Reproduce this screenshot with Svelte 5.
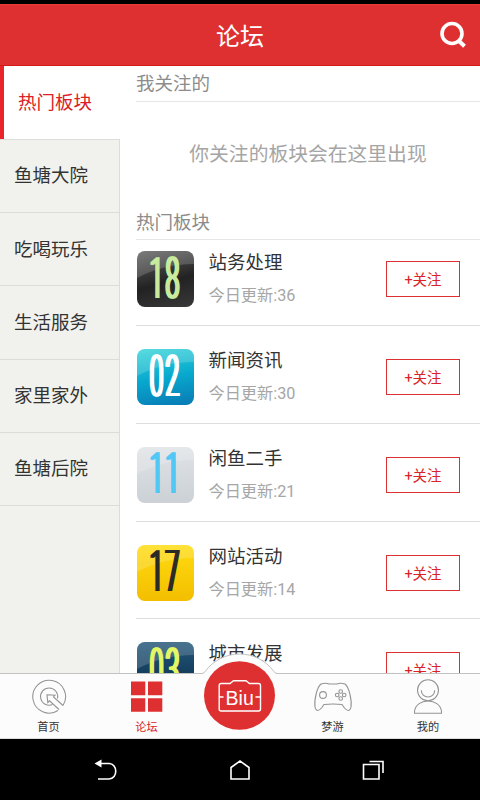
<script>
  let active = $state(0);

  const categories = ['热门板块', '鱼塘大院', '吃喝玩乐', '生活服务', '家里家外', '鱼塘后院'];

  const boards = [
    { num: '18', name: '站务处理', count: 36, style: 'leather' },
    { num: '02', name: '新闻资讯', count: 30, style: 'aqua' },
    { num: '11', name: '闲鱼二手', count: 21, style: 'silver' },
    { num: '17', name: '网站活动', count: 14, style: 'yellow' },
    { num: '03', name: '城市发展', count: 9, style: 'navy' },
  ];
</script>

<div class="phone">
  <div class="status"></div>
  <header>
    <span class="side"></span>
    <h1>论坛</h1>
    <svg class="side" viewBox="0 0 30 30" fill="none" stroke="#fff">
      <circle cx="14" cy="13.5" r="10" stroke-width="3.6" />
      <path d="M20.5 20.5L26.5 26.3" stroke-width="4" />
    </svg>
  </header>

  <main>
    <nav class="categories">
      {#each categories as category, i}
        <button class={i == active ? 'active' : ''} onclick={() => (active = i)}>{category}</button>
      {/each}
    </nav>

    <section class="content">
      <h2 class="followed">我关注的</h2>
      <p class="empty">你关注的板块会在这里出现</p>
      <h2 class="hot">热门板块</h2>
      {#each boards as board}
        <div class="board">
          <div class="icon {board.style}">
            <svg viewBox="0 0 57 56"><path d="M0 27V0H57V13Q26 13 0 27" fill="#fff" opacity=".17" /></svg>
            <span class="num">{board.num}</span>
          </div>
          <div class="info">
            <div class="name">{board.name}</div>
            <div class="count">今日更新:{board.count}</div>
          </div>
          <button class="follow">+关注</button>
        </div>
      {/each}
    </section>
  </main>

  <footer>
    <div class="tab home">
      <svg viewBox="0 0 40 36" fill="none" stroke="#949494" stroke-width="1.1">
        <path d="M34 26.500A16.400 16.400 0 1 0 29 31.500M34 26.500L24.500 18L26 16.300L18 15.800L18.800 23.500L20.500 21.800L30 30.500" />
        <path d="M23.500 25.500A8.600 8.600 0 1 1 28.500 19.500" />
      </svg>
      <span>首页</span>
    </div>
    <div class="tab forum">
      <svg viewBox="0 0 40 36" fill="#df3031">
        <path d="M4 2.500h14.300v13.800H4zM21 2.500h14.300v13.800H21zM4 19.300h14.300v13.500H4zM21 19.300h14.300v13.500H21z" />
      </svg>
      <span>论坛</span>
    </div>
    <div class="tab game">
      <svg viewBox="0 0 40 36" fill="none" stroke="#949494" stroke-width="1.100">
        <path d="M8 5Q13 3.500 16 5H24Q27 3.500 32 5C36 8 39 21 38 28Q36.500 34.500 31.500 29L29 25.500Q20 24.500 11 25.500L8.500 29Q3.500 34.500 2 28C1 21 4 8 8 5Z" />
        <circle cx="10" cy="16" r="3.400" />
        <circle cx="27.700" cy="12.500" r="1.800" />
        <circle cx="27.700" cy="19.500" r="1.800" />
        <circle cx="24.200" cy="16" r="1.800" />
        <circle cx="31.200" cy="16" r="1.800" />
      </svg>
      <span>梦游</span>
    </div>
    <div class="tab mine">
      <svg viewBox="0 0 40 36" fill="none" stroke="#949494" stroke-width="1.100">
        <circle cx="20" cy="11.300" r="10.500" />
        <path d="M13.300 11.300A6.700 6.700 0 0 0 26.700 11.300M6.500 34.300V32.500C8 18.500 32 18.500 33.500 32.500V34.300Z" />
      </svg>
      <span>我的</span>
    </div>

    <!-- camera button rising out of the tab bar -->
    <div class="biu">
      <svg viewBox="0 0 84 80">
        <path d="M3 20.500L7 16.500A42.500 42.500 0 0 1 72 16.500L76 20.500V26H3Z" fill="#fcfcfc" />
        <path d="M2 20.500Q4 20.500 5.500 18A42.500 42.500 0 0 1 73.500 18Q75 20.500 77 20.500" fill="#fcfcfc" stroke="#c2c2c2" />
        <ellipse cx="39.500" cy="42.500" rx="35.500" ry="34.300" fill="#df3031" />
        <path d="M23.500 44H19.200V32.500Q19.200 30.500 21.200 30.500H30L33.500 27.800H46L49.500 30.500H58.500Q60.500 30.500 60.500 32.500V44H55.500M60.500 44V56Q60.500 58 58.500 58H21.200Q19.200 58 19.200 56V44" fill="none" stroke="#fff" stroke-width="1.400" />
        <text x="39.700" y="51.500" text-anchor="middle">Biu</text>
      </svg>
    </div>
  </footer>

  <div class="system">
    <svg viewBox="0 0 30 30"><path d="M8 8.500H17C26 8.500 26 24 17 24H6" /><path d="M9.500 4.500V12.500L2.500 8.500Z" fill="#fff" stroke="none" /></svg>
    <svg viewBox="0 0 30 30"><path d="M6 24V12.500L15 6L24 12.500V24Z" /></svg>
    <svg viewBox="0 0 30 30"><path d="M5.500 9.500H21V24H5.500ZM11.500 6.500H25V18" /></svg>
  </div>
</div>

<style>
  :global(body) {
    margin: 0;
  }
  .phone {
    width: 480px;
    height: 800px;
    display: flex;
    flex-direction: column;
    overflow: hidden;
    background: #fff;
    font-family: Roboto, "Noto Sans CJK SC", sans-serif;
    color: #333;
  }
  button {
    font: inherit;
    border: 0;
    padding: 0;
  }
  h1, h2, p {
    margin: 0;
    font-weight: 400;
  }
  .status {
    flex: 0 0 4px;
    background: #000;
  }
  header {
    flex: 0 0 62px;
    box-sizing: border-box;
    padding: 0 12px;
    display: flex;
    align-items: center;
    justify-content: space-between;
    background: #df3031;
    border-top: 1px solid #ec3a35;
    border-bottom: 1px solid #d5191b;
    color: #fff;
  }
  header h1 {
    padding-top: 3px;
    font-size: 24px;
    line-height: 30px;
  }
  .side {
    width: 30px;
    height: 30px;
  }
  main {
    flex: 0 0 607px;
    display: flex;
    overflow: hidden;
  }
  .categories {
    flex: 0 0 120px;
    box-sizing: border-box;
    min-width: 0;
    border-right: 1px solid #dcddd9;
    background: #f1f2ed;
  }
  .categories button {
    display: block;
    box-sizing: border-box;
    width: 119px;
    height: 73.25px;
    padding: 0 0 3px 14px;
    border-bottom: 1px solid #dcddd9;
    background: #f1f2ed;
    color: #333;
    font-size: 18.5px;
    text-align: left;
  }
  .categories button.active {
    width: 120px;
    height: 73.75px;
    padding-left: 18px;
    box-shadow: inset 4px 0 #e8252a;
    background: #fff;
    color: #da2026;
  }
  .content {
    flex: 1;
    padding-left: 16px;
  }
  h2 {
    box-sizing: border-box;
    border-bottom: 1px solid #e6e6e6;
    color: #8c8c8c;
    font-size: 18.5px;
  }
  .followed {
    height: 36px;
    line-height: 36px;
  }
  .empty {
    height: 103px;
    line-height: 105px;
    text-align: center;
    color: #a5a5a5;
    font-size: 19.8px;
  }
  .hot {
    height: 35px;
    line-height: 36px;
  }
  .board {
    box-sizing: border-box;
    height: 97.8px;
    padding: 23px 20px 0 0;
    display: flex;
    align-items: flex-start;
    border-bottom: 1px solid #dedede;
  }
  .hot + .board {
    height: 86px;
    padding-top: 11px;
  }
  .icon {
    width: 57px;
    height: 56px;
    margin-left: 1px;
    border-radius: 8px;
    overflow: hidden;
    display: grid;
  }
  .icon > * {
    grid-area: 1 / 1;
  }
  .num {
    place-self: center;
    margin-top: 1px;
    font-size: 25px;
    font-weight: 300;
    line-height: 24px;
    letter-spacing: 2px;
    text-shadow: -0.7px 0, 0.7px 0, -1.4px 0, 1.4px 0;
    transform: scaleY(2.3);
  }
  .leather {
    background: linear-gradient(165deg, #606060, #222 55%, #393939);
    color: #c8eb9e;
  }
  .aqua {
    background: linear-gradient(170deg, #35d5d8, #08a9ce 50%, #0879b4);
    color: #fff;
  }
  .silver {
    background: linear-gradient(#e0e3e6, #cbd1d6);
    color: #51c8f5;
  }
  .yellow {
    background: linear-gradient(#ffdc10, #f3be00);
    color: #2b2a27;
  }
  .navy {
    background: linear-gradient(#245779, #082b49);
    color: #e3f765;
  }
  .info {
    flex: 1;
    padding-left: 14.5px;
  }
  .name {
    font-size: 18.5px;
    line-height: 24px;
  }
  .count {
    margin-top: 10px;
    font-size: 16.2px;
    line-height: 22px;
    color: #a6a6a6;
  }
  .follow {
    box-sizing: border-box;
    width: 74px;
    height: 36px;
    margin-top: 10px;
    padding-bottom: 1px;
    border: 1.5px solid #dc3033;
    background: #fff;
    color: #da2228;
    font-size: 14.5px;
  }
  footer {
    position: relative;
    flex: 0 0 66px;
    box-sizing: border-box;
    display: flex;
    border-top: 1px solid #c2c2c2;
    border-bottom: 1px solid #ddd;
    background: #fcfcfc;
  }
  .tab {
    width: 97px;
    padding-top: 5px;
    display: flex;
    flex-direction: column;
    align-items: center;
    font-size: 11.2px;
    line-height: 16px;
  }
  .tab svg {
    width: 40px;
    height: 36px;
    margin-bottom: 5px;
  }
  .forum {
    width: 99px;
    color: #da2228;
  }
  .game {
    margin-left: 88px;
  }
  .mine {
    width: 94px;
  }
  .biu {
    position: absolute;
    left: 199.5px;
    top: -21px;
    width: 84px;
    height: 80px;
  }
  .biu text {
    font: 19.5px "Liberation Sans", sans-serif;
    fill: #fff;
  }
  .system {
    flex: 1;
    padding: 0 40px;
    display: flex;
    justify-content: space-around;
    align-items: center;
    background: #000;
  }
  .system svg {
    width: 30px;
    height: 30px;
    fill: none;
    stroke: #fff;
    stroke-width: 1.6;
  }
</style>
